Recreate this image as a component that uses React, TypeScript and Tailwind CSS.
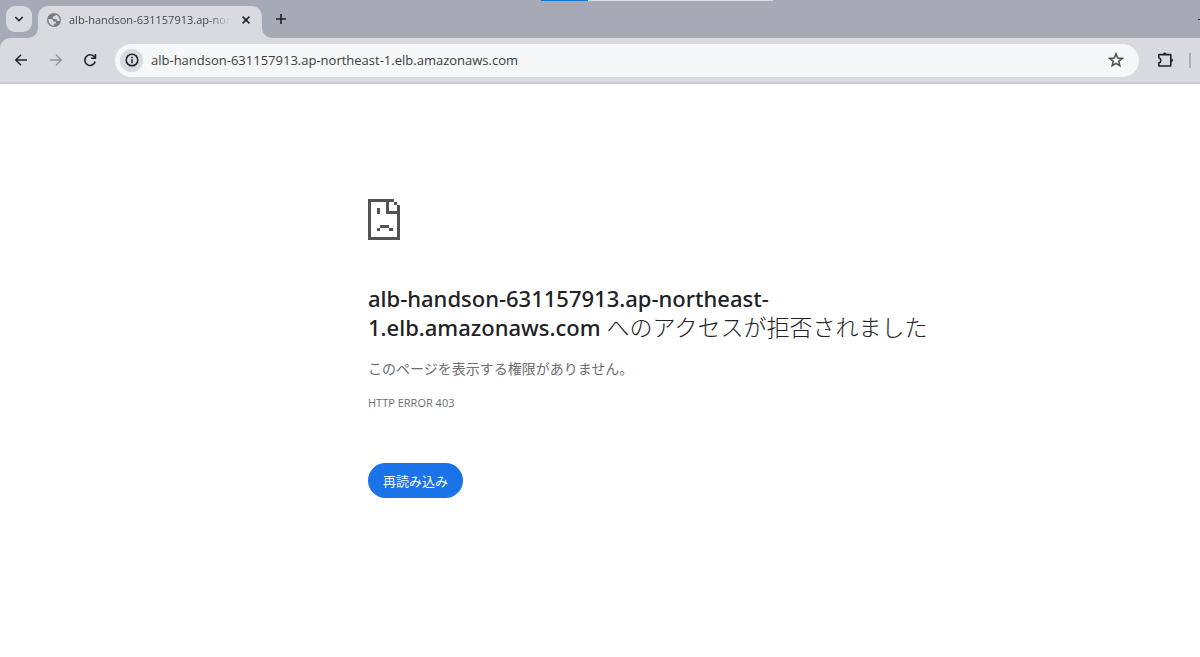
import React from "react";

const HOST = "alb-handson-631157913.ap-northeast-1.elb.amazonaws.com";

function TabStrip() {
  return (
    <header className="relative flex h-[38px] items-end bg-[#a6aab7] pl-[6px]">
      <div className="absolute left-[541px] top-0 flex h-px w-[232px]">
        <span className="w-[47px] bg-[#0f78d4]" />
        <span className="flex-1 bg-[#dcdde0]" />
      </div>
      <button
        aria-label="タブを検索"
        className="mb-[6px] flex h-[26px] w-[26px] items-center justify-center rounded-[9px] bg-[#d9dae0] text-[#202124]"
      >
        <svg width="10" height="10" viewBox="0 0 10 10" fill="none" stroke="currentColor" strokeWidth="1.6">
          <path d="M1.3 3 5 6.7 8.7 3" />
        </svg>
      </button>
      <div className="relative ml-[6px] flex h-[32px] w-[224px] items-center rounded-t-[10px] bg-[#d9dae0] pb-[5px] pl-[9px] pr-[8px]">
        <svg className="absolute -left-[10px] bottom-0" width="10" height="10" viewBox="0 0 10 10" fill="#d9dae0">
          <path d="M10 0v10H0A10 10 0 0 0 10 0Z" />
        </svg>
        <svg className="absolute -right-[10px] bottom-0" width="10" height="10" viewBox="0 0 10 10" fill="#d9dae0">
          <path d="M0 0v10h10A10 10 0 0 1 0 0Z" />
        </svg>
        <svg className="shrink-0" width="14" height="14" viewBox="0 0 14 14">
          <circle cx="7" cy="7" r="7" fill="#7b7c7e" />
          <path
            d="M1.4 6.1h2.8c1.4 0 2 .8 2 1.8v.7h1.6c.8 0 1.2.5 1.2 1.3v.6H7.2v2.1C4 12.9 1.3 10.1 1.4 6.1ZM8.1 1.5c2.7.6 4.6 2.7 4.6 5.5v.7c-.5.3-.9.4-1.6.4-1 0-1.5-.6-1.5-1.5v-.7H7.2c-.9 0-1.4-.5-1.4-1.3 0-.9.6-1.3 1.5-1.3h.5c.3 0 .5-.2.5-.5Z"
            fill="#d9dae0"
          />
        </svg>
        <div className="ml-[8px] w-[162px] overflow-hidden whitespace-nowrap text-[11px] leading-[16px] text-[#45474c] [mask-image:linear-gradient(to_right,black_86%,transparent)]">
          {HOST}
        </div>
        <button aria-label="タブを閉じる" className="ml-[8px] flex h-[14px] w-[14px] items-center justify-center text-[#202124]">
          <svg width="8" height="8" viewBox="0 0 8 8" stroke="currentColor" strokeWidth="1.5">
            <path d="m.6.6 6.8 6.8M7.4.6.6 7.4" />
          </svg>
        </button>
      </div>
      <button aria-label="新しいタブ" className="mb-[9px] ml-[9px] flex h-[20px] w-[20px] items-center justify-center text-[#202124]">
        <svg width="10" height="10" viewBox="0 0 10 10" stroke="currentColor" strokeWidth="1.6">
          <path d="M5 0v10M0 5h10" />
        </svg>
      </button>
      <button aria-label="最小化" className="mb-[18px] ml-auto h-px w-[2px] bg-[#202124]" />
    </header>
  );
}

function Toolbar() {
  return (
    <div className="bg-[#a6aab7]">
      <div className="flex h-[46px] items-center rounded-tl-[10px] border-b-2 border-[#c9cace] bg-[#d9dae0] pl-[14px] pr-[9px]">
        <button aria-label="戻る" className="text-[#202124]">
          <svg width="14" height="14" viewBox="0 0 14 14" fill="none" stroke="currentColor" strokeWidth="1.5">
            <path d="M13 7H2M7 1.8 1.8 7 7 12.2" />
          </svg>
        </button>
        <button aria-label="進む" disabled className="ml-[21px] text-[#919398]">
          <svg width="14" height="14" viewBox="0 0 14 14" fill="none" stroke="currentColor" strokeWidth="1.4">
            <path d="M1 7h11M7 1.8 12.2 7 7 12.2" />
          </svg>
        </button>
        <button aria-label="再読み込み" className="ml-[20px] text-[#202124]">
          <svg width="14" height="14" viewBox="0 0 14 14" fill="none" stroke="currentColor" strokeWidth="1.6">
            <path d="M12.2 8.6A5.3 5.3 0 1 1 11 3.5l1.4 1.4" />
            <path d="M12.4 1v4.3H8.1" />
          </svg>
        </button>
        <div className="ml-[18px] flex h-[33px] flex-1 items-center rounded-full bg-[#f5f7f9] pl-[5px] pr-[15px]">
          <button aria-label="サイト情報を表示" className="flex h-[23px] w-[23px] shrink-0 items-center justify-center rounded-full bg-[#d9dae0] text-[#202124]">
            <svg width="14" height="14" viewBox="0 0 14 14" fill="none" stroke="currentColor" strokeWidth="1.5">
              <circle cx="7" cy="7" r="5.8" />
              <path d="M7 6.2v4M7 3.7v1.5" />
            </svg>
          </button>
          <input
            aria-label="アドレス"
            defaultValue={HOST}
            className="ml-[8px] min-w-0 flex-1 bg-transparent text-[13px] leading-[18px] text-[#3b3d42] outline-none"
          />
          <button aria-label="ブックマークに追加" className="text-[#4b4d51]">
            <svg width="16" height="16" viewBox="0 0 16 16" fill="none" stroke="currentColor" strokeWidth="1.5">
              <path d="m8 1.9 1.7 4.2 4.5.3-3.5 2.9 1.1 4.4L8 11.3l-3.8 2.4 1.1-4.4-3.5-2.9 4.5-.3Z" />
            </svg>
          </button>
        </div>
        <button aria-label="拡張機能" className="ml-[17px] text-[#202124]">
          <svg width="18" height="18" viewBox="0 0 18 18">
            <path
              d="M3.4 3.6h10.9q.5 0 .5.5v10.4q0 .5-.5.5H3.4q-.6 0-.6-.5v-2.6c1.3-.3 2-1.2 2-2.5s-.7-2.3-2-2.6V4.1q0-.5.6-.5Z"
              fill="none"
              stroke="currentColor"
              strokeWidth="1.6"
              strokeLinejoin="round"
            />
            <path d="M7 3.2a1.8 1.8 0 0 1 3.6 0ZM15.2 7.5a1.8 1.8 0 0 1 0 3.6Z" fill="currentColor" />
          </svg>
        </button>
        <span className="ml-[15px] h-[15px] w-[2px] bg-[#a9b0c0]" />
      </div>
    </div>
  );
}

function SadPage() {
  return (
    <svg width="32" height="41" viewBox="0 0 32 41" fill="#535353" shapeRendering="crispEdges" aria-hidden="true">
      <path d="M0 0h26v3h-5v9h8V6h3v35H0ZM3 3v35h26V15H18V3Z" fillRule="evenodd" />
      <path d="M26 3h3v3h-3ZM9 9h3v6H9ZM12 26h9v3h-9ZM9 29h3v3H9ZM21 29h4v3h-4Z" />
    </svg>
  );
}

export default function App() {
  return (
    <div className="min-h-screen bg-white font-['Open_Sans','Noto_Sans_CJK_JP',sans-serif]">
      <TabStrip />
      <Toolbar />
      <main className="pl-[368px] pt-[115px]">
        <div className="max-w-[576px]">
          <SadPage />
          <h1 className="mt-[44px] text-[23px] font-light leading-[29px] text-[#202124]">
            <span className="font-['Noto_Sans',sans-serif] text-[22px] font-medium">{HOST}</span> へのアクセスが拒否されました
          </h1>
          <p className="mt-[16px] text-[14px] leading-[22px] text-[#6b6e73]">このページを表示する権限がありません。</p>
          <p className="mt-[14px] text-[11px] leading-[18px] text-[#6b6e73]">HTTP ERROR 403</p>
          <button className="mt-[51px] h-[35px] rounded-full bg-[#1a73e8] px-[15px] text-[13px] leading-[18px] text-white">
            再読み込み
          </button>
        </div>
      </main>
    </div>
  );
}
